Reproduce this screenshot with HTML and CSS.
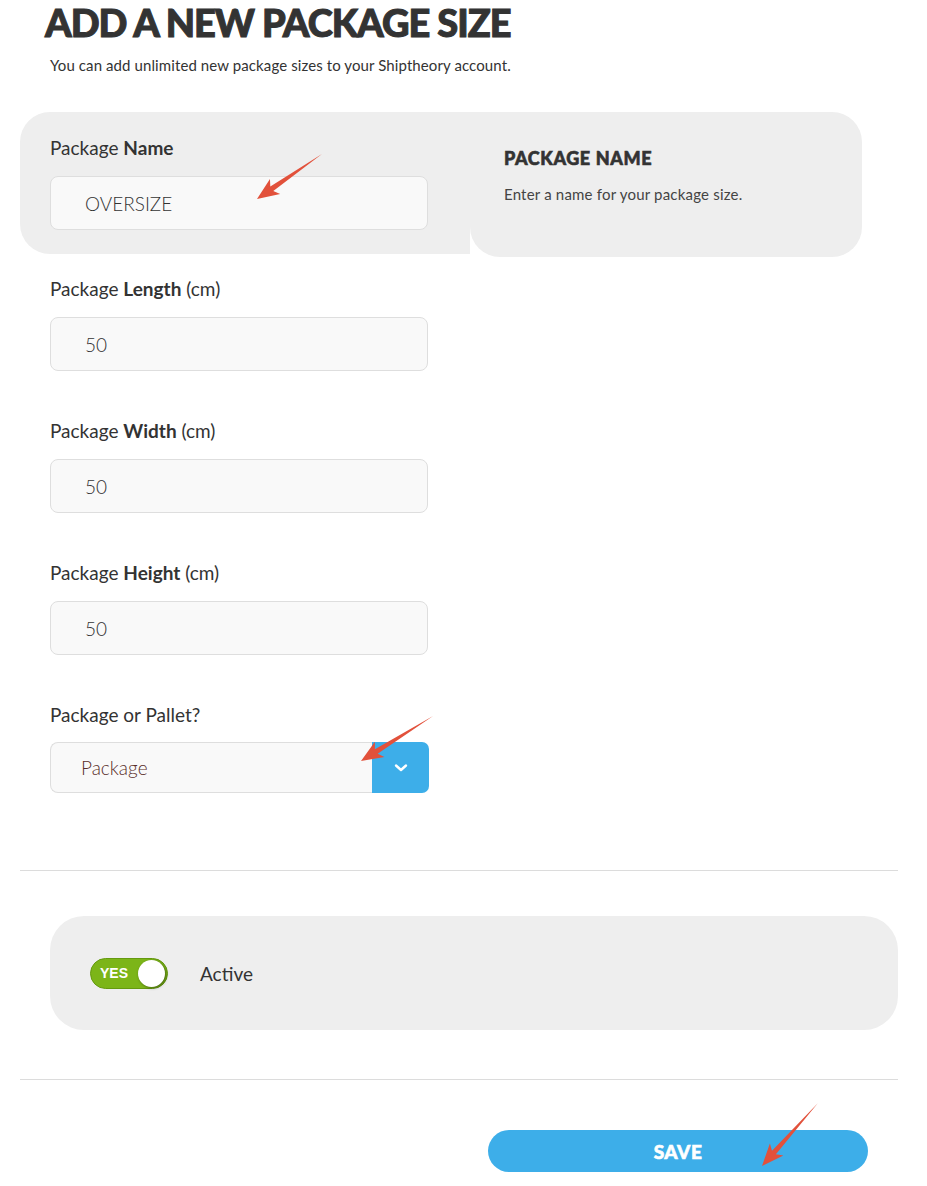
FILE: index.html
```html
<!DOCTYPE html>
<html lang="en">
<head>
  <meta charset="UTF-8">
  <meta name="viewport" content="width=device-width, initial-scale=1.0">
  <title>Add a new package size</title>
  <link rel="stylesheet" href="styles.css">
</head>
<body>
  <main class="page">
    <h1 class="title">ADD A NEW PACKAGE SIZE</h1>
    <p class="lead">You can add unlimited new package sizes to your Shiptheory account.</p>

    <!-- Campo com ajuda ao lado -->
    <div class="focus-row">
      <div class="field focus-field">
        <label class="field-label">Package <b>Name</b></label>
        <div class="input">OVERSIZE</div>
      </div>
      <aside class="help">
        <h2 class="help-title">PACKAGE NAME</h2>
        <p class="help-text">Enter a name for your package size.</p>
      </aside>
    </div>

    <div class="field-list">
      <div class="field">
        <label class="field-label">Package <b>Length</b> (cm)</label>
        <div class="input">50</div>
      </div>
      <div class="field">
        <label class="field-label">Package <b>Width</b> (cm)</label>
        <div class="input">50</div>
      </div>
      <div class="field">
        <label class="field-label">Package <b>Height</b> (cm)</label>
        <div class="input">50</div>
      </div>
      <div class="field">
        <label class="field-label">Package or Pallet?</label>
        <div class="select">
          <span class="select-value">Package</span>
          <span class="select-btn">
            <svg width="14" height="10" viewBox="0 0 14 10"><path d="M2 2.5 L7 7 L12 2.5" fill="none" stroke="#fff" stroke-width="2.4" stroke-linecap="round" stroke-linejoin="round"/></svg>
          </span>
        </div>
      </div>
    </div>

    <hr class="divider">

    <div class="status-panel">
      <span class="toggle">
        <span class="toggle-text">YES</span>
        <span class="toggle-knob"></span>
      </span>
      <span class="status-label">Active</span>
    </div>

    <hr class="divider">

    <div class="actions">
      <button class="save">SAVE</button>
    </div>
  </main>

  <!-- Setas vermelhas de anotação -->
  <svg class="marks" width="927" height="1186" viewBox="0 0 927 1186">
    <g fill="#e2513b">
      <polygon transform="translate(257,199) rotate(145.3)" points="0,0 -22,-9 -18,-2.6 -79,0 -18,2.6 -22,9"/>
      <polygon transform="translate(361,761) rotate(148)" points="0,0 -22,-9 -18,-2.6 -85,0 -18,2.6 -22,9"/>
      <polygon transform="translate(762,1166) rotate(131.6)" points="0,0 -22,-9 -18,-2.6 -84,0 -18,2.6 -22,9"/>
    </g>
  </svg>
</body>
</html>
```

FILE: styles.css
```css
/* Página */
body {
  margin: 0;
  font-family: Lato, "Noto Sans", sans-serif;
  color: #333;
  background: #fff;
  position: relative;
}

.page {
  padding: 0 29px 0 20px;
}

.title {
  margin: 0 0 0 25px;
  font-size: 38px;
  line-height: 44px;
  font-weight: 900;
  letter-spacing: -1px;
  color: #333;
  -webkit-text-stroke: 1px #333;
}

.lead {
  margin: 12px 0 0 30px;
  font-size: 15px;
  letter-spacing: 0.1px;
  color: #333;
}

/* Linha com o campo em destaque */
.focus-row {
  display: flex;
  align-items: flex-start;
  margin-top: 38px;
  width: 842px;
}

.focus-field {
  width: 390px;
  padding: 25px 30px 24px 30px;
  background: #eeeeee;
  border-radius: 30px 0 0 30px;
}

.help {
  flex: 1;
  height: 145px;
  box-sizing: border-box;
  padding: 35px 30px 0 34px;
  background: #eeeeee;
  border-radius: 0 30px 30px 30px;
}

.help-title {
  margin: 0;
  font-size: 18px;
  font-weight: 900;
  letter-spacing: 0.6px;
  color: #333;
  -webkit-text-stroke: 0.6px #333;
}

.help-text {
  margin: 16px 0 0;
  font-size: 15px;
  font-weight: 400;
  letter-spacing: 0.2px;
  color: #444;
}

/* Campos */
.field-list {
  padding: 21px 0 0 30px;
}

.field-list .field {
  margin-bottom: 49px;
}

.field-list .field:last-child {
  margin-bottom: 0;
}

.field-label {
  display: block;
  font-size: 19px;
  line-height: 22px;
  margin-bottom: 17px;
}

.field-label b {
  font-weight: 700;
}

.input {
  width: 378px;
  height: 54px;
  box-sizing: border-box;
  display: flex;
  align-items: center;
  padding-left: 34px;
  background: #f9f9f9;
  border: 1px solid #dedede;
  border-radius: 8px;
  font-size: 19px;
  font-weight: 300;
  color: #333;
}

.select {
  display: flex;
  width: 379px;
  height: 51px;
  margin-top: -1px;
}

.select-value {
  flex: 1;
  display: flex;
  align-items: center;
  padding-left: 30px;
  background: #f9f9f9;
  border: 1px solid #dedede;
  border-right: none;
  border-radius: 8px 0 0 8px;
  font-size: 19px;
  font-weight: 300;
  color: #5a2e2a;
}

.select-btn {
  width: 57px;
  display: flex;
  align-items: center;
  justify-content: center;
  background: #3daee9;
  border-radius: 0 7px 7px 0;
}

.divider {
  margin: 77px 0 0;
  border: none;
  border-top: 1px solid #dcdcdc;
}

/* Painel de status */
.status-panel {
  display: flex;
  align-items: center;
  gap: 32px;
  margin: 45px 0 49px 30px;
  height: 114px;
  padding-left: 40px;
  background: #eeeeee;
  border-radius: 34px;
}

.status-panel + .divider {
  margin-top: 0;
}

.toggle {
  position: relative;
  display: flex;
  align-items: center;
  width: 78px;
  height: 31px;
  box-sizing: border-box;
  padding-left: 9px;
  background: #7cb518;
  border: 1px solid #659a0f;
  border-radius: 16px;
}

.toggle-text {
  font-family: "Liberation Sans", Arial, sans-serif;
  font-size: 14px;
  font-weight: 700;
  color: #fff;
}

.toggle-knob {
  position: absolute;
  right: 2px;
  top: 1px;
  width: 27px;
  height: 27px;
  border-radius: 50%;
  background: #fff;
  box-shadow: 1px 1px 3px rgba(0, 0, 0, 0.45);
}

.status-label {
  font-size: 19px;
}

/* Botão salvar */
.actions {
  display: flex;
  justify-content: flex-end;
  padding: 50px 30px 0 0;
}

.save {
  width: 380px;
  height: 42px;
  border: none;
  border-radius: 21px;
  background: #3daee9;
  color: #fff;
  font-family: Lato, "Noto Sans", sans-serif;
  font-size: 19px;
  font-weight: 900;
  letter-spacing: 0.5px;
  -webkit-text-stroke: 0.6px #fff;
}

.marks {
  position: absolute;
  top: 0;
  left: 0;
  pointer-events: none;
}
```
